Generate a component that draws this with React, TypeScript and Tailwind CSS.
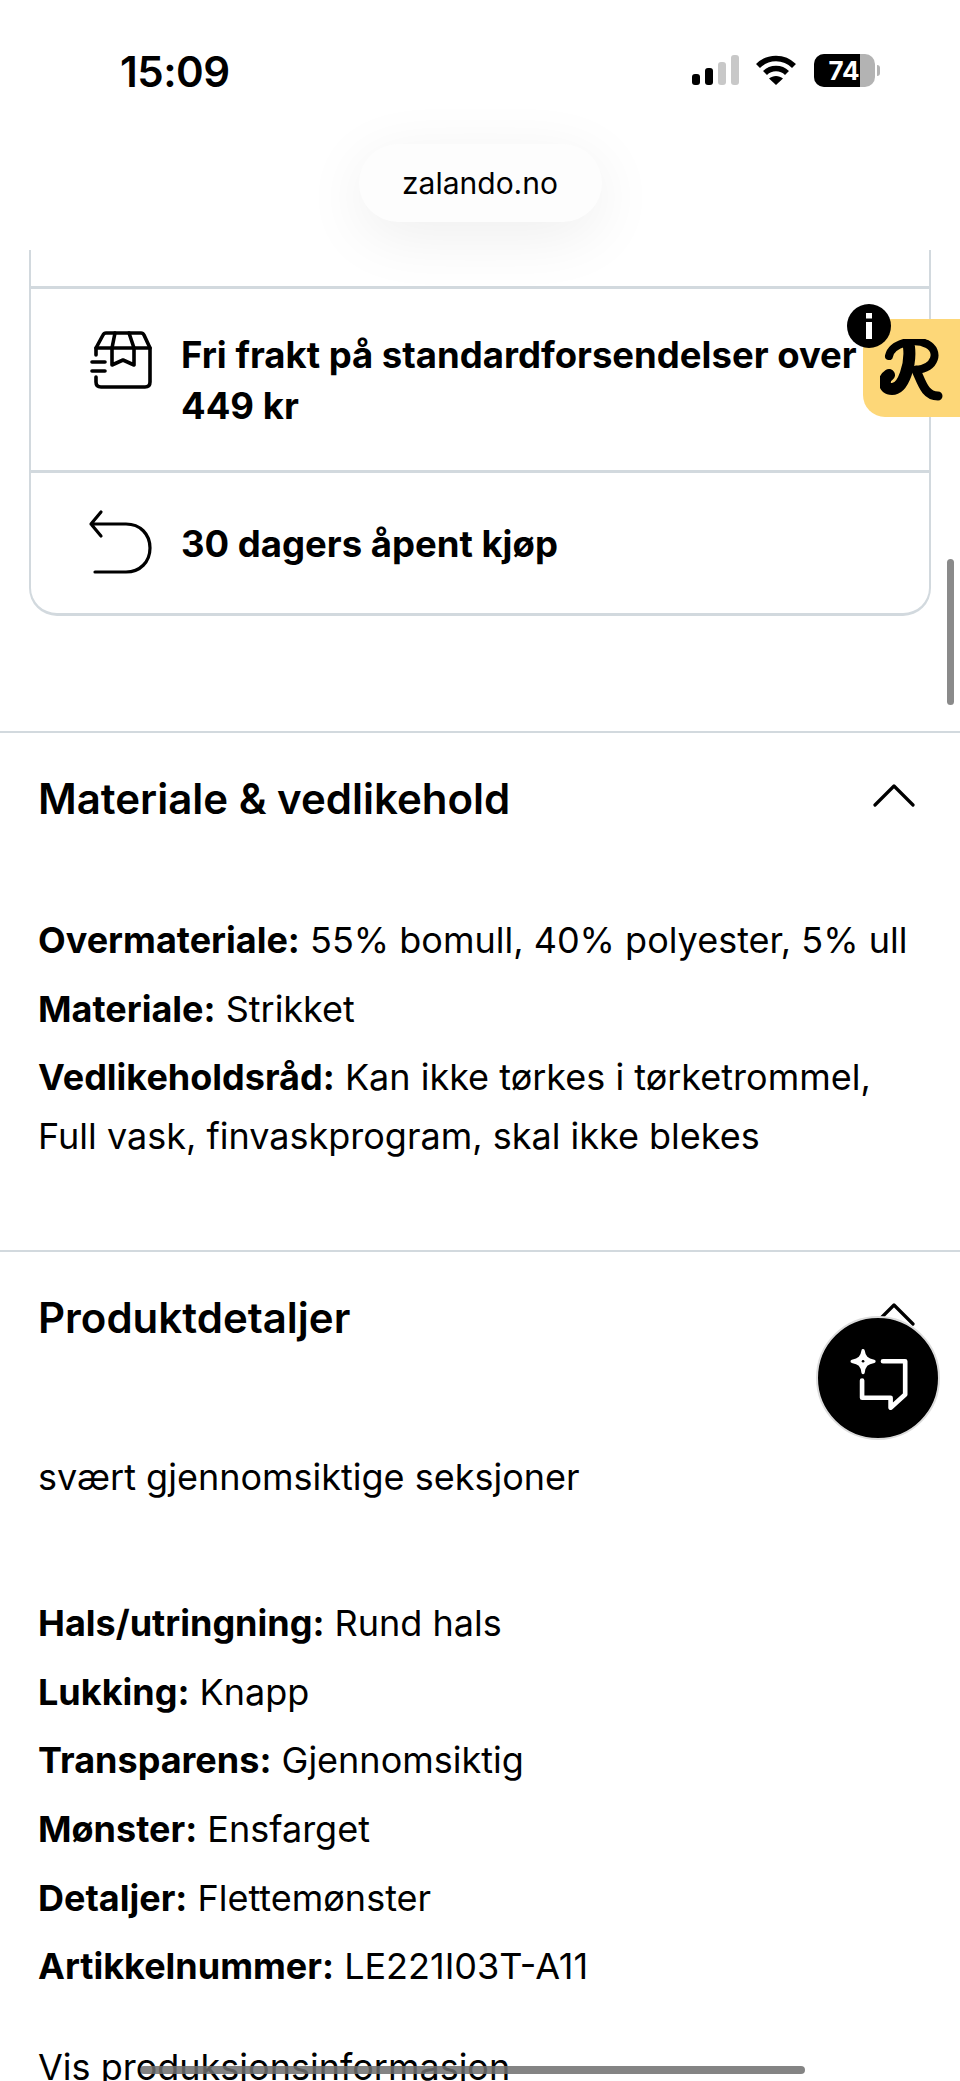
import React from "react";

const Chevron = ({ className = "" }: { className?: string }) => (
  <svg viewBox="0 0 42 24" className={className} fill="none" stroke="#000" strokeWidth="3.2" strokeLinecap="round" strokeLinejoin="round">
    <path d="M2 22 L21 3 L40 22" />
  </svg>
);

const Line = ({ label, value, className = "" }: { label: string; value: string; className?: string }) => (
  <p className={className}>
    <span className="font-bold">{label}</span> {value}
  </p>
);

export default function App() {
  return (
    <div className="relative h-[2081px] w-[960px] overflow-hidden bg-white text-black font-['Inter',sans-serif]">
      {/* Browser header */}
      <header className="h-[250px] flex flex-col">
        <div className="flex justify-between items-start pt-[49px] pl-[120px] pr-[80px] h-[144px]">
          <span className="text-[42px] leading-[46px] font-semibold tracking-[-0.5px]">15:09</span>
          <div className="flex items-start pt-[5px] gap-[15px]">
            <svg width="48" height="31" viewBox="0 0 48 31" className="mt-[1px] -ml-[6px]">
              <rect x="0" y="19" width="8" height="11" rx="3" fill="#000" />
              <rect x="13" y="13" width="8" height="17" rx="3" fill="#000" />
              <rect x="26" y="7" width="8" height="23" rx="3" fill="#c8c8c8" />
              <rect x="39" y="0" width="8" height="30" rx="3" fill="#c8c8c8" />
            </svg>
            <svg width="42" height="31" viewBox="0 0 42 31" className="mt-[1px]" fill="none" stroke="#000" strokeWidth="5.6">
              <path d="M3 11 C13 1 29 1 39 11" />
              <path d="M10 18 C16 12 26 12 32 18" />
              <path d="M21 30 L14 23.5 C18 20 24 20 28 23.5 Z" fill="#000" stroke="none" />
            </svg>
            <div className="flex items-center ml-[2px]">
              <div className="relative w-[61px] h-[33px] rounded-[10px] overflow-hidden bg-[#b3b3b3]">
                <div className="absolute inset-y-0 left-0 w-[46px] bg-black" />
                <span className="absolute inset-0 flex items-center justify-center pr-[1px] text-[26px] leading-none font-bold text-white">74</span>
              </div>
              <div className="w-[3px] h-[11px] ml-[2px] rounded-r-full bg-[#b3b3b3]" />
            </div>
          </div>
        </div>
        <div className="flex justify-center">
          <div className="w-[243px] h-[78px] rounded-[39px] bg-[#fdfdfd] shadow-[0_14px_64px_rgba(0,0,0,0.07)] flex items-center justify-center text-[30px]">
            zalando.no
          </div>
        </div>
      </header>

      {/* Delivery card */}
      <section className="mx-[29px] h-[366px] border-x-2 border-b-[3px] border-[#d2d9de] rounded-b-[28px] flex flex-col">
        <div className="h-[39px] border-b-[3px] border-[#d2d9de]" />
        <div className="h-[184px] border-b-[3px] border-[#d2d9de] flex items-start pl-[59px] pt-[41px]">
          <svg width="64" height="60" viewBox="0 0 64 60" fill="none" stroke="#000" strokeWidth="3.6" strokeLinecap="round" strokeLinejoin="round" className="shrink-0">
            <path d="M6 25 V18 L13 5 Q14 3 16 3 H51 Q53 3 54 5 L60 18 V52 Q60 57 55 57 H11 Q6 57 6 52 V47" />
            <path d="M6 18 H60" />
            <path d="M25 3 L22 18 V35 L33 30 L44 35 V18 L39 3" />
            <path d="M2 32 H15 M2 41 H15" />
          </svg>
          <p className="ml-[27px] w-[695px] text-[36.5px] leading-[51px] font-bold">
            Fri frakt på standardforsendelser over 449 kr
          </p>
        </div>
        <div className="flex-1 flex items-start pl-[57px] pt-[36px]">
          <svg width="66" height="66" viewBox="0 0 66 66" fill="none" stroke="#000" strokeWidth="3.2" strokeLinecap="round" strokeLinejoin="round" className="shrink-0">
            <path d="M13 3 L3 15 L13 27 M3 15 H38 C52 15 62 25 62 39 C62 53 52 63 38 63 H7" />
          </svg>
          <p className="ml-[27px] text-[36.5px] leading-[50px] font-bold mt-[10px]">30 dagers åpent kjøp</p>
        </div>
      </section>

      {/* Material */}
      <section className="mt-[115px] border-t-2 border-[#d2d9de] h-[519px] px-[38px] relative">
        <div className="flex items-center justify-between h-[134px] pr-[7px]">
          <h2 className="text-[42px] leading-[50px] font-semibold -mt-[2px]">Materiale &amp; vedlikehold</h2>
          <Chevron className="w-[42px] h-[24px] -mt-[11px]" />
        </div>
        <div className="mt-[44px] text-[36px] leading-[59px] flex flex-col gap-[9.5px]">
          <Line label="Overmateriale:" value="55% bomull, 40% polyester, 5% ull" />
          <Line label="Materiale:" value="Strikket" />
          <Line label="Vedlikeholdsråd:" value="Kan ikke tørkes i tørketrommel, Full vask, finvaskprogram, skal ikke blekes" />
        </div>
      </section>

      {/* Product details */}
      <section className="border-t-2 border-[#d2d9de] px-[38px]">
        <div className="flex items-center justify-between h-[134px] pr-[7px]">
          <h2 className="text-[42px] leading-[50px] font-semibold -mt-[3px]">Produktdetaljer</h2>
          <Chevron className="w-[42px] h-[24px] -mt-[11px]" />
        </div>
        <div className="mt-[62px] text-[36px] leading-[59px]">
          <p>svært gjennomsiktige seksjoner</p>
          <div className="mt-[87px] flex flex-col gap-[9.7px]">
            <Line label="Hals/utringning:" value="Rund hals" />
            <Line label="Lukking:" value="Knapp" />
            <Line label="Transparens:" value="Gjennomsiktig" />
            <Line label="Mønster:" value="Ensfarget" />
            <Line label="Detaljer:" value="Flettemønster" />
            <Line label="Artikkelnummer:" value="LE221I03T-A11" />
          </div>
          <p className="mt-[42px]">Vis produksjonsinformasjon</p>
        </div>
      </section>

      {/* Scrollbar */}
      <div className="absolute left-[947px] top-[559px] w-[7px] h-[146px] rounded-full bg-[#8a8a8a]" />

      {/* R widget */}
      <div className="absolute left-[863px] top-[319px] w-[97px] h-[98px] rounded-l-[22px] bg-[#fdd778]">
        <svg viewBox="0 0 70 66" width="70" height="66" className="absolute left-[17px] top-[20px]" fill="none" stroke="#000" strokeLinecap="round" strokeLinejoin="round">
          <path d="M9 17 C12 4 34 -1 47 5 C60 12 56 29 36 31" strokeWidth="8" />
          <path d="M29 8 C31 24 24 50 12 50 C3 50 3 40 9 36" strokeWidth="12" />
          <path d="M36 31 C42 44 45 57 58 57" strokeWidth="9" />
        </svg>
      </div>
      <div className="absolute left-[847px] top-[304px] w-[44px] h-[44px] rounded-full bg-black flex items-center justify-center">
        <svg width="8" height="26" viewBox="0 0 8 26" fill="#fff">
          <rect x="1" y="0" width="6" height="5.5" />
          <rect x="1" y="9" width="6" height="17" />
        </svg>
      </div>

      {/* Chat button */}
      <div className="absolute left-[816px] top-[1316px] w-[124px] h-[124px] rounded-full bg-black border-2 border-[#dcdcdc] flex items-center justify-center">
        <svg width="60" height="63" viewBox="260 225 180 190" fill="none" stroke="#fff" strokeWidth="14" strokeLinecap="round" strokeLinejoin="round">
          <path d="M305 236 C308 256 316 264 338 268 C316 272 308 280 305 302 C302 280 294 272 272 268 C294 264 302 256 305 236 Z" fill="#fff" strokeWidth="10" />
          <circle cx="305" cy="268" r="4" fill="#000" stroke="none" />
          <path d="M365 268 H432 V368 L388 408 V378 H302 V326" />
        </svg>
      </div>

      {/* Home indicator */}
      <div className="absolute left-[140px] top-[2066px] w-[665px] h-[8px] rounded-full bg-[#6e6e6e]/85" />
    </div>
  );
}
